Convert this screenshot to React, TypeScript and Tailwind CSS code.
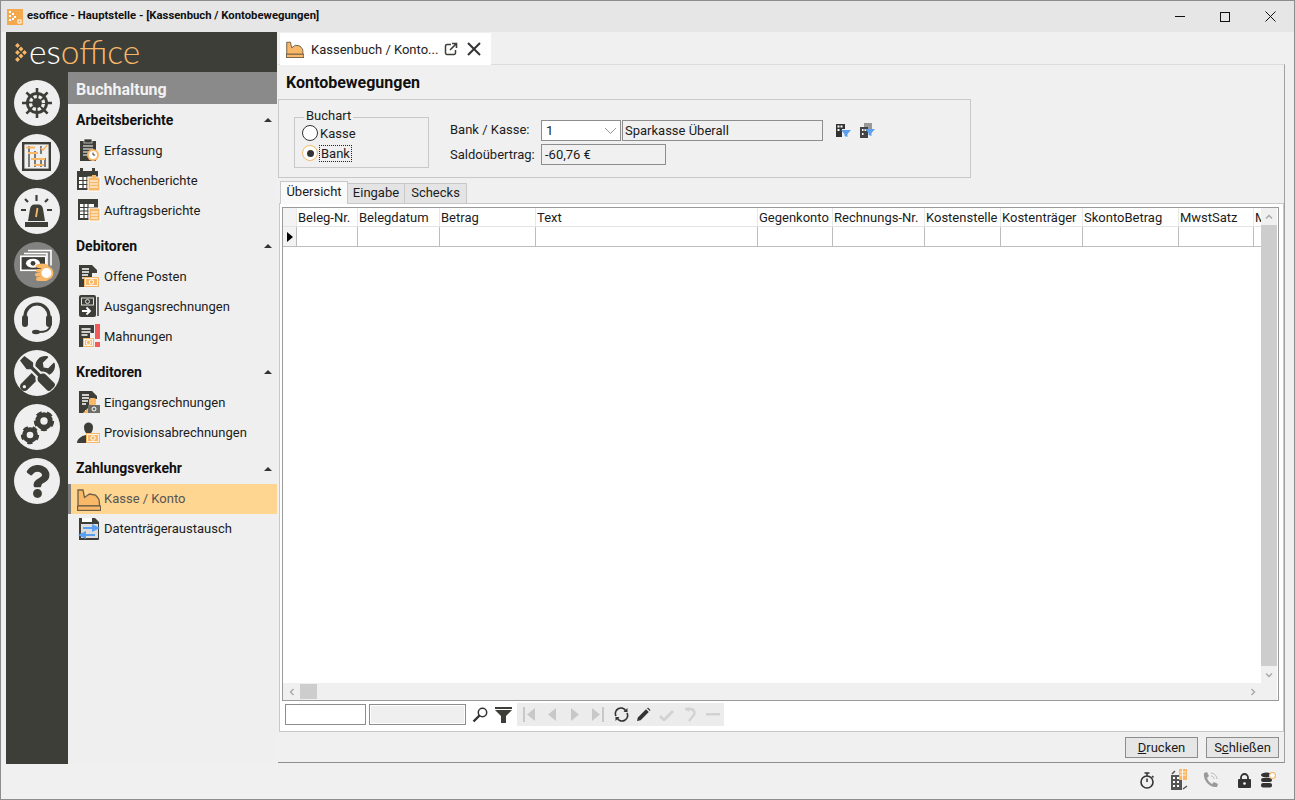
import React from "react";
import { FaTools, FaQuestion } from "react-icons/fa";

const D = "#3e3e39";
const O = "#f8b868";

function Svg({ s = 24, children, className = "" }: { s?: number; children: React.ReactNode; className?: string }) {
  return (
    <svg width={s} height={s} viewBox={`0 0 ${s} ${s}`} className={`block shrink-0 ${className}`}>
      {children}
    </svg>
  );
}

const Money = ({ x, y, w = 14, h = 10 }: { x: number; y: number; w?: number; h?: number }) => (
  <g>
    <rect x={x} y={y} width={w} height={h} fill={O} />
    <rect x={x + 1.5} y={y + 1.5} width={w - 3} height={h - 3} fill="none" stroke="#fff" strokeWidth="0.8" />
    <circle cx={x + w / 2} cy={y + h / 2} r="2.2" fill="none" stroke="#fff" strokeWidth="1" />
  </g>
);

const Doc = () => (
  <g>
    <path d="M2 1h13l5 5v3h-5v11H8v3H2z" fill={D} />
    <path d="M5 5h7M5 8h7M5 11h6M5 14h4" stroke="#fff" strokeWidth="1.300" />
  </g>
);

const Till = ({ s }: { s: number }) => (
  <svg width={s} height={s} viewBox="0 0 24 24" className="block shrink-0">
    <path d="M1 3h5l1.500 7.500 5-3.500 6 1 2.500 3c1.500 1 1.500 3 1.500 8H1z" fill={O} stroke="#6f5f48" strokeWidth="1.300" />
    <rect x="0.600" y="19" width="23" height="4.400" fill={O} stroke="#6f5f48" strokeWidth="1.200" />
  </svg>
);

const menuIcons: Record<string, React.ReactNode> = {
  erfassung: (
    <Svg>
      <rect x="3" y="3" width="16" height="20" fill={D} />
      <rect x="7" y="1" width="8" height="4" fill={D} stroke="#fff" strokeWidth="0.600" />
      <path d="M6 8h10M6 11h10M6 14h6M6 17h4" stroke="#fff" strokeWidth="1.200" />
      <circle cx="16" cy="17" r="6" fill={O} />
      <circle cx="16" cy="17" r="4" fill="#fff" />
      <path d="M16 14.500V17h2.200" stroke={D} strokeWidth="1" fill="none" />
    </Svg>
  ),
  woche: (
    <Svg>
      <rect x="0" y="3" width="21" height="19" fill={D} />
      <rect x="3" y="0" width="3" height="5" fill={D} />
      <rect x="15" y="0" width="3" height="5" fill={D} />
      <path d="M2 9h12v11H2z" fill="#fff" />
      <path d="M2 12.500h12M2 16.500h12M6 9v11M10 9v11" stroke={D} strokeWidth="1.200" />
      <rect x="11" y="9" width="12" height="14" fill={O} stroke="#fff" strokeWidth="1" />
      <path d="M13 13h8M13 16h8M13 19h8" stroke="#fff" strokeWidth="1.200" />
      <rect x="15" y="7" width="4" height="3" fill={O} />
    </Svg>
  ),
  auftrag: (
    <Svg>
      <rect x="1" y="1" width="20" height="21" fill={D} />
      <rect x="3" y="6" width="14" height="14" fill="#fff" />
      <path d="M3 9.500h14M3 13h14M3 16.500h14M7 6v14M11 6v14" stroke={D} strokeWidth="1.200" />
      <rect x="12" y="10" width="11" height="13" fill={O} stroke="#fff" strokeWidth="1" />
      <path d="M14 14h7M14 17h7M14 20h7" stroke="#fff" strokeWidth="1.200" />
    </Svg>
  ),
  offen: (
    <Svg>
      <Doc />
      <Money x={7} y={13} w={15} h={10} />
    </Svg>
  ),
  ausgang: (
    <Svg>
      <path d="M21 3v19" stroke={D} strokeWidth="1.500" />
      <rect x="2" y="1" width="17" height="22" rx="2" fill={D} />
      <rect x="4.500" y="4" width="12" height="7" fill="none" stroke="#ddd" strokeWidth="1" />
      <circle cx="10.500" cy="7.500" r="2" fill="none" stroke="#ddd" strokeWidth="1" />
      <path d="M5 17h7M9.500 13.500 13 17l-3.500 3.500" stroke="#fff" strokeWidth="1.800" fill="none" />
    </Svg>
  ),
  mahn: (
    <Svg>
      <path d="M2 1h15v8h-4v11H8v3H2z" fill={D} />
      <path d="M4.500 5h9M4.500 8h9M4.500 11h6" stroke="#fff" strokeWidth="1.300" />
      <Money x={6} y={14} w={11} h={9} />
      <rect x="18" y="0" width="5" height="15" fill="#f25a5a" />
      <rect x="18" y="18" width="5" height="5" fill="#f25a5a" />
    </Svg>
  ),
  eingang: (
    <Svg>
      <Doc />
      <rect x="12" y="8" width="7" height="8" rx="2" fill={O} />
      <path d="M6 23l5-5v5z" fill={O} />
      <rect x="11" y="15" width="12" height="8" fill="#6d6d68" />
      <circle cx="17" cy="19" r="2" fill="none" stroke="#fff" strokeWidth="1" />
    </Svg>
  ),
  prov: (
    <Svg>
      <path d="M7 7c0-6 9-6 9 0 0 3-1 5-2 6v2h-5v-2c-1-1-2-3-2-6z" fill={D} />
      <path d="M0 23c0-4 4-7 9-8v8z" fill={D} />
      <Money x={9} y={13} w={14} h={10} />
    </Svg>
  ),
  kasse: <Till s={24} />,
  daten: (
    <Svg>
      <path d="M2 1h16l4 4v17a1 1 0 0 1-1 1H2z" fill={D} />
      <rect x="5" y="1" width="10" height="4" fill="#fff" />
      <rect x="4" y="7" width="17" height="14" fill="#ddd" />
      <path d="M6 10h9V7l8 4-8 4v-3H6z" fill="#5b9ff0" />
      <path d="M18 17H9v-3l-8 4 8 4v-3h9z" fill="#5b9ff0" />
    </Svg>
  ),
};

function MenuItem({ icon, label, active, tight }: { icon: string; label: string; active?: boolean; tight?: boolean }) {
  return (
    <div
      className={`h-[30px] flex items-center gap-[3px] text-[13px] ${
        active ? "bg-[#fed591] text-[#555] border-l-[3px] border-[#808080] pl-[6px]" : "text-[#1c1c1c] pl-[9px]"
      }`}
    >
      <span className="w-[24px] flex justify-center">{menuIcons[icon]}</span>
      <span className={tight ? "" : "pt-[2px]"}>{label}</span>
    </div>
  );
}

function Section({ title, mt, children, tight }: { title: string; mt: string; children: React.ReactNode; tight?: boolean }) {
  return (
    <div className={mt}>
      <div className="h-[31px] flex items-center justify-between pl-[8px] pr-[5px]">
        <span className={`text-[14px] font-bold text-[#111] ${tight ? "" : "pt-[2px]"}`}>{title}</span>
        <span className="w-0 h-0 border-x-[4px] border-x-transparent border-b-[4px] border-b-[#333]" />
      </div>
      {children}
    </div>
  );
}

function NavCircle({ children, active }: { children: React.ReactNode; active?: boolean }) {
  return (
    <div
      className={`w-[46px] h-[46px] rounded-full flex items-center justify-center overflow-hidden ${
        active ? "bg-[#828280]" : "bg-[#efefef]"
      }`}
    >
      {children}
    </div>
  );
}

const Logo = () => (
  <svg width="12" height="19" viewBox="0 0 12 19" className="block">
    {[
      [2.500, 2.500],
      [2.500, 9.500],
      [2.500, 16.500],
      [6, 6],
      [6, 13],
      [9.500, 9.500],
    ].map(([x, y], i) => (
      <path key={i} d={`M${x} ${y - 2.4}l2.400 2.400-2.400 2.400-2.400-2.400z`} fill={O} />
    ))}
  </svg>
);

const cols = [
  { n: "Beleg-Nr.", w: 61 },
  { n: "Belegdatum", w: 82 },
  { n: "Betrag", w: 96 },
  { n: "Text", w: 222 },
  { n: "Gegenkonto", w: 75 },
  { n: "Rechnungs-Nr.", w: 92 },
  { n: "Kostenstelle", w: 76 },
  { n: "Kostenträger", w: 82 },
  { n: "SkontoBetrag", w: 96 },
  { n: "MwstSatz", w: 75 },
  { n: "M", w: 8 },
];

const Chev = ({ d }: { d: string }) => (
  <svg width="8" height="8" viewBox="0 0 8 8" className="block">
    <path d={d} fill="none" stroke="#a8a8a8" strokeWidth="1.400" />
  </svg>
);

function Grey({ children }: { children: React.ReactNode }) {
  return <span className="w-[23px] flex justify-center">{children}</span>;
}

const Gear = ({ cx, cy, r }: { cx: number; cy: number; r: number }) => (
  <g>
    <circle cx={cx} cy={cy} r={r * 0.62} fill="none" stroke={D} strokeWidth={r * 0.5} />
    <circle cx={cx} cy={cy} r={r * 0.9} fill="none" stroke={D} strokeWidth={r * 0.24} strokeDasharray={`${r * 0.58} ${r * 0.55}`} />
  </g>
);

export default function App() {
  return (
    <div
      className="w-[1295px] h-[800px] box-border border border-[#8d8d8d] bg-[#f0f0f0] flex flex-col overflow-hidden text-[13px] text-[#1c1c1c]"
      style={{ fontFamily: "Roboto, 'Liberation Sans', sans-serif" }}
    >
      {/* title bar */}
      <div className="h-[31px] shrink-0 bg-[#e6e6e6] flex items-center pl-[6px]">
        <div className="w-[16px] h-[16px] bg-[#f5a94e] mr-[4px] flex items-center justify-center">
          <svg width="16" height="16" viewBox="0 0 16 16">
            <path d="M2 2h2v2H2zM5 4h2v2H5zM2 6h2v2H2zM7 7h2v2H7zM2 10h2v2H2zM5 9h2v2H5z" fill="#fff" />
            <rect x="11" y="11" width="3" height="3" fill="none" stroke="#fff" />
          </svg>
        </div>
        <span className="text-[11.300px] font-bold text-[#111]">esoffice - Hauptstelle - [Kassenbuch / Kontobewegungen]</span>
        <div className="ml-auto flex items-center">
          <div className="w-[45px] flex justify-center">
            <div className="w-[10px] h-[1px] bg-[#111]" />
          </div>
          <div className="w-[45px] flex justify-center">
            <div className="w-[10px] h-[10px] border border-[#111]" />
          </div>
          <div className="w-[46px] flex justify-center mr-[1px]">
            <svg width="11" height="11" viewBox="0 0 11 11">
              <path d="M.5.500l10 10M10.500.500l-10 10" stroke="#111" strokeWidth="1" />
            </svg>
          </div>
        </div>
      </div>

      {/* body */}
      <div className="h-[732px] shrink-0 flex pl-[5px] pr-[9px]">
        {/* sidebar */}
        <div className="w-[271px] bg-[#3e3e39] flex flex-col">
          <div className="h-[40px] flex items-center pl-[9px] gap-[2px]">
            <Logo />
            <span className="text-[33.500px] font-light leading-none" style={{ fontFamily: "Lato, sans-serif" }}>
              <span className="text-white">es</span>
              <span className="text-[#f8b868]">office</span>
            </span>
          </div>
          <div className="flex-1 flex">
            <div className="w-[62px] flex flex-col items-center gap-[8px] pt-[8px]">
              <NavCircle>
                <svg width="46" height="46" viewBox="0 0 46 46">
                  <path
                    d="M23 8V38M8 23H38M12.400 12.400L33.600 33.600M33.600 12.400L12.400 33.600"
                    stroke={D}
                    strokeWidth="2.600"
                  />
                  <circle cx="23" cy="23" r="11" fill={D} />
                  <circle cx="23" cy="23" r="6.500" fill="none" stroke="#efefef" strokeWidth="3.200" strokeDasharray="3.300 1.800" strokeDashoffset="-0.900" />
                  <circle cx="23" cy="23" r="2.800" fill={D} />
                </svg>
              </NavCircle>
              <NavCircle>
                <svg width="46" height="46" viewBox="0 0 46 46">
                  <rect x="9.200" y="9.200" width="26.600" height="26.600" fill="none" stroke={D} strokeWidth="2.400" />
                  <path d="M15 12v21M21 17v16M27 12v8M27 26v7M31 24v9" stroke={D} strokeWidth="1.300" />
                  <path d="M12 13.500h9M14 19h10M17 25h14M20 31h10" stroke={O} strokeWidth="2" />
                  <path d="M27 14l2 2 4-4.500" stroke={O} strokeWidth="1.600" fill="none" />
                </svg>
              </NavCircle>
              <NavCircle>
                <svg width="46" height="46" viewBox="0 0 46 46">
                  <rect x="11" y="34" width="23" height="5" fill={D} />
                  <path d="M14 33l2-12c.5-3 2-4.500 4.500-4.500h4c2.500 0 4 1.500 4.500 4.500l2 12z" fill={D} />
                  <path d="M23.500 20l-1.500 9" stroke={O} strokeWidth="1.800" />
                  <path d="M22.500 7v6M11 11l3 3M34 11l-3 3M7 22h5M33 22h5" stroke={D} strokeWidth="2.200" />
                </svg>
              </NavCircle>
              <NavCircle active>
                <svg width="46" height="46" viewBox="0 0 46 46">
                  <path d="M14 8.500h23v15" fill="none" stroke="#fff" strokeWidth="1.600" />
                  <path d="M10 11.500h23v15" fill="none" stroke="#fff" strokeWidth="1.600" />
                  <rect x="6.800" y="14.300" width="25" height="14" fill={D} stroke="#fff" strokeWidth="1.600" />
                  <ellipse cx="19" cy="21.300" rx="7" ry="4.500" fill="#fff" />
                  <circle cx="19" cy="21.300" r="2.400" fill={D} />
                  <ellipse cx="28" cy="24" rx="6.500" ry="2.500" fill={O} />
                  <rect x="22" y="27" width="11" height="3.500" rx="1.700" fill={O} />
                  <rect x="21" y="31" width="11" height="3.500" rx="1.700" fill={O} />
                  <rect x="22" y="35" width="12" height="4" rx="2" fill={O} />
                  <circle cx="32.500" cy="31" r="6" fill="#fff" stroke={O} strokeWidth="2" />
                </svg>
              </NavCircle>
              <NavCircle>
                <svg width="46" height="46" viewBox="0 0 46 46">
                  <path d="M11 24v-4a12 12 0 0 1 24 0v4" fill="none" stroke={D} strokeWidth="3.200" />
                  <rect x="8" y="19" width="6" height="12" rx="3" fill={D} />
                  <rect x="32" y="19" width="6" height="12" rx="3" fill={D} />
                  <path d="M36 30c0 4-5 6-11 6" fill="none" stroke={D} strokeWidth="2" />
                  <ellipse cx="22" cy="36" rx="4" ry="2.200" fill={D} />
                </svg>
              </NavCircle>
              <NavCircle>
                <FaTools size={35} color={D} />
              </NavCircle>
              <NavCircle>
                <svg width="46" height="46" viewBox="0 0 46 46">
                  <Gear cx={30} cy={17} r={10} />
                  <Gear cx={16} cy={31} r={9} />
                </svg>
              </NavCircle>
              <NavCircle>
                <FaQuestion size={33} color={D} />
              </NavCircle>
            </div>
            <div className="w-[209px] bg-[#efefef]">
              <div className="h-[32px] bg-[#8a8a8a] flex items-center pl-[8px] pt-[3px] text-[16px] font-bold text-[#f2f2f2]">
                Buchhaltung
              </div>
              <Section title="Arbeitsberichte" mt="">
                <MenuItem icon="erfassung" label="Erfassung" />
                <MenuItem icon="woche" label="Wochenberichte" />
                <MenuItem icon="auftrag" label="Auftragsberichte" />
              </Section>
              <Section title="Debitoren" mt="mt-[5px]">
                <MenuItem icon="offen" label="Offene Posten" />
                <MenuItem icon="ausgang" label="Ausgangsrechnungen" />
                <MenuItem icon="mahn" label="Mahnungen" />
              </Section>
              <Section title="Kreditoren" mt="mt-[5px]">
                <MenuItem icon="eingang" label="Eingangsrechnungen" />
                <MenuItem icon="prov" label="Provisionsabrechnungen" />
              </Section>
              <Section title="Zahlungsverkehr" mt="mt-[6px]" tight>
                <MenuItem icon="kasse" label="Kasse / Konto" active tight />
                <MenuItem icon="daten" label="Datenträgeraustausch" tight />
              </Section>
            </div>
          </div>
        </div>

        {/* main */}
        <div className="w-[1007px] ml-[1px] mb-[1px] flex flex-col">
          {/* tab bar */}
          <div className="h-[32px] shrink-0 flex items-end pl-[2px]">
            <div className="w-[211px] h-[32px] bg-white flex items-center pl-[6px] -mb-[1px] relative z-10">
              <Till s={18} />
              <span className="ml-[7px] text-[13px] w-[131px] whitespace-nowrap text-[#222] pt-[1px]">Kassenbuch / Konto...</span>
              <svg width="14" height="14" viewBox="0 0 14 14" className="ml-[2px]">
                <path d="M7 2.500H3A1.500 1.500 0 0 0 1.500 4v7A1.500 1.500 0 0 0 3 12.500h7a1.500 1.500 0 0 0 1.500-1.500V8" fill="none" stroke="#3e3e39" strokeWidth="1.500" />
                <path d="M6 8l6-6M8 1.500h4.500V6" fill="none" stroke="#3e3e39" strokeWidth="1.600" />
              </svg>
              <svg width="14" height="14" viewBox="0 0 14 14" className="ml-[9px]">
                <path d="M1 1l12 12M13 1L1 13" stroke="#333" strokeWidth="2" />
              </svg>
            </div>
          </div>
          {/* panel */}
          <div className="flex-1 border-t border-t-[#dcdcdc] border-r border-r-[#a0a0a0] border-b border-b-[#8d8d8d] flex flex-col">
            <div className="h-[34px] shrink-0 flex items-center pl-[8px] pt-[2px] text-[16px] font-bold text-[#111]">Kontobewegungen</div>
            {/* filter */}
            <div className="w-[693px] h-[79px] shrink-0 border border-[#c8c8c8] flex pl-[15px] pt-[17px]">
              <div className="relative w-[135px] h-[51px] border border-[#c8c8c8] pl-[7px] pt-[5px]">
                <span className="absolute left-[9px] -top-[10px] bg-[#f0f0f0] px-[2px] text-[13px] leading-[15px]">Buchart</span>
                <div className="flex items-center h-[20px]">
                  <span className="w-[16px] h-[16px] rounded-full bg-white border border-[#333]" />
                  <span className="ml-[2px] pt-[1px]">Kasse</span>
                </div>
                <div className="flex items-center h-[20px]">
                  <span className="w-[16px] h-[16px] rounded-full bg-white border border-[#f8b868] flex items-center justify-center">
                    <span className="w-[7px] h-[7px] rounded-full bg-[#333]" />
                  </span>
                  <span className="ml-[1px] px-[1px] border border-dotted border-[#222] leading-[15px]">Bank</span>
                </div>
              </div>
              <div className="ml-[21px] mt-[3px]">
                <div className="flex items-center h-[21px]">
                  <span className="w-[91px] pb-[2px]">Bank / Kasse:</span>
                  <div className="w-[80px] h-[21px] bg-white border border-[#8d8d8d] flex items-center pl-[4px] justify-between pr-[3px]">
                    <span>1</span>
                    <svg width="13" height="8" viewBox="0 0 13 8">
                      <path d="M1 1l5.500 5.500L12 1" fill="none" stroke="#999" strokeWidth="1" />
                    </svg>
                  </div>
                  <div className="w-[201px] h-[21px] ml-[1px] border border-[#8d8d8d] flex items-center pl-[2px] bg-[#f0f0f0]">
                    Sparkasse Überall
                  </div>
                  <svg width="16" height="15" viewBox="0 0 16 15" className="ml-[12px]">
                    <path d="M1 1h9v5H7v8H1z" fill="#333" />
                    <path d="M2.500 2.500h2v2h-2zM5.500 2.500h2v2h-2zM2.500 6h2v2h-2z" fill="#fff" />
                    <path d="M6 7h10l-3.500 4v3l-3-1v-2z" fill="#5b9ff0" />
                  </svg>
                  <svg width="16" height="15" viewBox="0 0 16 15" className="ml-[8px]">
                    <path d="M5 0h8v6H5z" fill="#999" />
                    <path d="M1 4h8v11H1z" fill="#444" />
                    <path d="M3 6h1.500v2H3zM5.500 6H7v2H5.500zM3 10h1.500v2H3z" fill="#fff" />
                    <path d="M6 6h10l-3.500 4v3l-3-1v-2z" fill="#5b9ff0" />
                  </svg>
                </div>
                <div className="flex items-center h-[21px] mt-[3px]">
                  <span className="w-[91px]">Saldoübertrag:</span>
                  <div className="w-[125px] h-[21px] border border-[#8d8d8d] flex items-center pl-[3px] bg-[#f0f0f0]">-60,76 €</div>
                </div>
              </div>
            </div>
            {/* tabs */}
            <div className="h-[22px] shrink-0 mt-[3px] flex items-end pl-[2px] relative z-10">
              <div className="w-[68px] h-[23px] bg-[#fafafa] border border-[#c8c8c8] border-b-0 flex items-center justify-center -mb-[1px] pb-[2px]">
                Übersicht
              </div>
              <div className="w-[57px] h-[20px] bg-[#e4e4e4] border-t border-r border-[#c8c8c8] flex items-center justify-center pb-[2px]">Eingabe</div>
              <div className="w-[62px] h-[20px] bg-[#e4e4e4] border-t border-r border-[#c8c8c8] flex items-center justify-center pb-[2px]">Schecks</div>
            </div>
            {/* white panel */}
            <div className="h-[529px] shrink-0 ml-[1px] bg-white border border-[#c8c8c8] flex flex-col pl-[2px] pr-[5px] pt-[3px]">
              <div className="w-[997px] h-[494px] shrink-0 border border-[#9a9a9a] flex flex-col">
                <div className="flex-1 flex min-h-0">
                  <div className="w-[978px] overflow-hidden">
                    <div className="flex h-[19px] border-b border-[#e4e4e4]">
                      <div className="w-[13px] shrink-0 bg-[#f3f3f3]" />
                      {cols.map((c) => (
                        <div key={c.n} style={{ width: c.w }} className="shrink-0 border-l border-[#e8e8e8] pl-[1px] text-[13px] leading-[20px] whitespace-nowrap overflow-hidden text-[#1c1c1c]">
                          {c.n}
                        </div>
                      ))}
                    </div>
                    <div className="flex h-[20px] border-b border-[#bdbdbd]">
                      <div className="w-[13px] shrink-0 flex items-center pl-[4px] bg-[#f3f3f3]">
                        <span className="w-0 h-0 border-y-[5px] border-y-transparent border-l-[6px] border-l-black" />
                      </div>
                      {cols.map((c, i) => (
                        <div key={c.n + i} style={{ width: c.w }} className="shrink-0 border-l border-[#bdbdbd]" />
                      ))}
                    </div>
                  </div>
                  <div className="w-[16px] shrink-0 bg-[#f0f0f0] flex flex-col items-center">
                    <div className="h-[17px] flex items-center"><Chev d="M1 5.500l3-3 3 3" /></div>
                    <div className="w-[16px] flex-1 bg-[#cdcdcd]" />
                    <div className="h-[17px] flex items-center"><Chev d="M1 2.500l3 3 3-3" /></div>
                  </div>
                </div>
                <div className="h-[17px] shrink-0 bg-[#f0f0f0] flex items-center w-[994px]">
                  <div className="w-[17px] flex justify-center"><Chev d="M5.500 1l-3 3 3 3" /></div>
                  <div className="w-[17px] h-[15px] bg-[#cdcdcd]" />
                  <div className="ml-auto w-[17px] mr-[16px] flex justify-center"><Chev d="M2.500 1l3 3-3 3" /></div>
                </div>
              </div>
              <div className="flex items-center h-[23px] mt-[2px]">
                <div className="w-[81px] h-[21px] ml-[3px] bg-white border border-[#8d8d8d]" />
                <div className="w-[97px] h-[21px] ml-[3px] bg-[#efefef] border border-[#8d8d8d] outline outline-1 -outline-offset-2 outline-white" />
                <svg width="16" height="16" viewBox="0 0 16 16" className="ml-[6px]">
                  <circle cx="10.500" cy="5.500" r="4.200" fill="none" stroke="#333" strokeWidth="1.500" />
                  <path d="M7.500 8.500l-6 6" stroke="#333" strokeWidth="2.400" />
                </svg>
                <svg width="17" height="16" viewBox="0 0 17 16" className="ml-[7px]">
                  <path d="M0 0h17v2H0zM0 3h17l-6 6v7H6V9z" fill="#3e3e39" />
                </svg>
                <div className="ml-[5px] w-[207px] h-[23px] bg-[#ececec] flex items-center pl-[1px]">
                  <Grey>
                    <svg width="14" height="15" viewBox="0 0 14 15"><path d="M1 0h2v15H1zM13 1v13L5 7.500z" fill="#c8c8c8" /></svg>
                  </Grey>
                  <Grey>
                    <svg width="10" height="15" viewBox="0 0 10 15"><path d="M9 1v13L1 7.500z" fill="#c8c8c8" /></svg>
                  </Grey>
                  <Grey>
                    <svg width="10" height="15" viewBox="0 0 10 15"><path d="M1 1v13l8-6.500z" fill="#c8c8c8" /></svg>
                  </Grey>
                  <Grey>
                    <svg width="14" height="15" viewBox="0 0 14 15"><path d="M11 0h2v15h-2zM1 1v13l8-6.500z" fill="#c8c8c8" /></svg>
                  </Grey>
                  <Grey>
                    <svg width="15" height="15" viewBox="0 0 15 15">
                      <path d="M2 9A5.500 5.500 0 0 1 11.500 3.500M13 6A5.500 5.500 0 0 1 3.500 11.500" fill="none" stroke="#333" strokeWidth="1.700" />
                      <path d="M13.500 1v4h-4zM1.500 14v-4h4z" fill="#333" />
                    </svg>
                  </Grey>
                  <Grey>
                    <svg width="15" height="15" viewBox="0 0 15 15">
                      <path d="M1 14l.8-3.500L10 2.200l2.800 2.800-8.200 8.200zM11 1.200l1-.7 2.500 2.500-.7 1z" fill="#333" />
                    </svg>
                  </Grey>
                  <Grey>
                    <svg width="15" height="12" viewBox="0 0 15 12"><path d="M1 7l4 4 9-9" fill="none" stroke="#d2d2d2" strokeWidth="2.800" /></svg>
                  </Grey>
                  <Grey>
                    <svg width="12" height="15" viewBox="0 0 12 15">
                      <path d="M1 2h6a4 4 0 0 1 2 7l-4 5" fill="none" stroke="#d2d2d2" strokeWidth="2.400" />
                      <path d="M5 0v5L1 2z" fill="#d2d2d2" />
                    </svg>
                  </Grey>
                  <Grey>
                    <svg width="14" height="4" viewBox="0 0 14 4"><rect width="14" height="2.500" fill="#d2d2d2" /></svg>
                  </Grey>
                </div>
              </div>
            </div>
            {/* footer */}
            <div className="flex-1 flex items-center justify-end gap-[8px] pr-[5px]">
              <button className="w-[73px] h-[21px] bg-[#e6e6e6] border border-[#8d8d8d] text-[13px] leading-[19px] text-[#1c1c1c]">
                <span className="underline">D</span>rucken
              </button>
              <button className="w-[73px] h-[21px] bg-[#e6e6e6] border border-[#8d8d8d] text-[13px] leading-[19px] text-[#1c1c1c]">
                S<span className="underline">c</span>hließen
              </button>
            </div>
          </div>
        </div>
      </div>

      {/* status bar */}
      <div className="flex-1 flex items-center justify-end pr-[18px] pb-[3px]">
        <svg width="16" height="17" viewBox="0 0 16 17" className="mr-[14px]">
          <circle cx="8" cy="10" r="6" fill="none" stroke="#333" strokeWidth="1.600" />
          <path d="M5.500 1h5M8 1v3M8 10V6.500M13 4l1.500 1.500" stroke="#333" strokeWidth="1.500" />
        </svg>
        <svg width="20" height="22" viewBox="0 0 20 22" className="mr-[14px]">
          <rect x="2" y="6" width="11" height="15" fill="#555" />
          <path d="M4 8h2v2H4zM8 8h2v2H8zM4 12h2v2H4zM8 12h2v2H8zM4 16h2v2H4zM8 16h2v2H8z" fill="#fff" />
          <rect x="10" y="0" width="8" height="11" fill={O} />
          <path d="M11 3h6M11 6h6M13.500 0v11" stroke="#fff" strokeWidth="0.800" />
          <path d="M14 20l4-3M3 5l3-3" stroke="#555" strokeWidth="1.500" />
        </svg>
        <svg width="16" height="18" viewBox="0 0 16 18" className="mr-[19px]">
          <path d="M1 2l3-1 2 4-2 2c1 3 3 5 5 6l2-2 4 2-1 3c-8 1-14-7-13-14z" fill="#9a9a9a" />
          <path d="M8 2c3 0 6 3 6 6M8 5c1.500 0 3 1 3 3" fill="none" stroke="#b8b8b8" strokeWidth="1" />
        </svg>
        <svg width="13" height="15" viewBox="0 0 13 15" className="mr-[10px]">
          <path d="M3 7V4.500a3.500 3.500 0 0 1 7 0V7" fill="none" stroke="#333" strokeWidth="1.800" />
          <rect x="0" y="6" width="13" height="9" rx="1" fill="#333" />
          <circle cx="6.500" cy="10.500" r="1.300" fill="#fff" />
        </svg>
        <svg width="15" height="16" viewBox="0 0 15 16">
          <ellipse cx="5.500" cy="3" rx="5.500" ry="2.500" fill="#333" />
          <rect x="0" y="6" width="11" height="4" rx="2" fill="#333" />
          <rect x="0" y="11" width="11" height="4.500" rx="2" fill="#333" />
          <circle cx="11.500" cy="3.500" r="3" fill="#fff" stroke={O} strokeWidth="1.200" />
        </svg>
      </div>
    </div>
  );
}
